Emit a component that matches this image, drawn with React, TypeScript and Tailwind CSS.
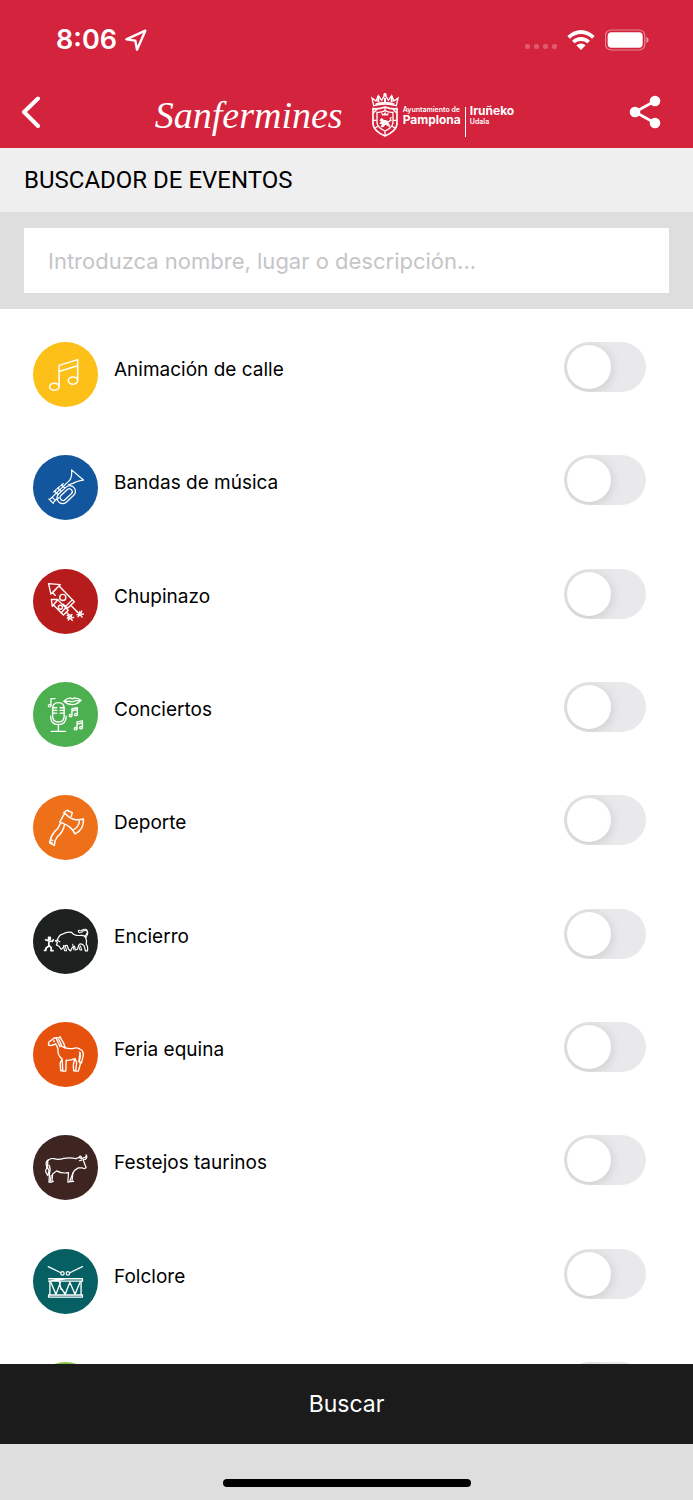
import type { ReactNode } from "react";

type Category = { id: string; label?: string; color: string; icon: ReactNode };

const Spark = ({ x, y }: { x: number; y: number }) => (
  <g transform={`translate(${x} ${y})`}>
    <path d="M-4-3L-9-6M3-4L5-9M5 1L10 0M3 5L6 9M-3 4L-6 8M-5 1L-9 2M0-4L-1-8M-3-2L2-4L4 2L-1 4Z" />
  </g>
);

const Notes = ({ x, y }: { x: number; y: number }) => (
  <g transform={`translate(${x} ${y})`} strokeWidth="4">
    <path d="M-5 10V-9L11-12V7M-5-3L11-6" />
    <ellipse cx="-9" cy="11" rx="4" ry="3.5" />
    <ellipse cx="7" cy="8" rx="4" ry="3.5" />
  </g>
);

const categories: Category[] = [
  {
    id: "animacion",
    label: "Animación de calle",
    color: "bg-[#fcc018]",
    icon: (
      <g strokeWidth="4.4">
        <path d="M77 132V69L132 52V114M77 87L132 70" />
        <ellipse cx="63" cy="132" rx="14" ry="10.5" />
        <ellipse cx="118" cy="114" rx="14" ry="10.5" />
      </g>
    ),
  },
  {
    id: "bandas",
    label: "Bandas de música",
    color: "bg-[#12569d]",
    icon: (
      <g>
        <path d="M114 44L149 74Q128 77 118 84M114 44Q116 66 108 75" />
        <path d="M108 75L52 129M118 84L105 88M47 130L60 143M52 129L57 125L66 134L60 140M66 134L76 126" />
        <g transform="rotate(-43 97 116)">
          <rect x="66" y="101" width="62" height="33" rx="16" />
          <rect x="76" y="109" width="42" height="17" rx="8" />
        </g>
        <path d="M64 107L72 115M74 98L82 106M85 89L93 97M61 109L68 103M71 100L78 94M82 91L89 85" strokeWidth="4" />
      </g>
    ),
  },
  {
    id: "chupinazo",
    label: "Chupinazo",
    color: "bg-[#b71c1c]",
    icon: (
      <g strokeWidth="4">
        <path d="M46 43L81 46L53 74ZM77 50L122 97L103 115L89 104M58 70L66 78M60 68L72 55M115 92L97 110M112 108L132 128" />
        <circle cx="88" cy="84" r="9" />
        <path d="M54 90L74 90L57 110ZM74 92L104 122L90 136L62 108M96 115L83 130M101 130L106 136" />
        <circle cx="81" cy="113" r="6" />
        <Spark x={139} y={133} />
        <Spark x={110} y={143} />
      </g>
    ),
  },
  {
    id: "conciertos",
    label: "Conciertos",
    color: "bg-[#4caf50]",
    icon: (
      <g>
        <path d="M58 79Q58 61 75 61Q92 61 92 79V101Q92 118 75 118Q58 118 58 101Z" strokeWidth="4" />
        <path d="M52 101Q52 126 75 126Q98 126 98 101M75 126V145M54 146H96M59 76H70M59 84H70M59 92H70M80 76H91M80 84H91M80 92H91" strokeWidth="4" />
        <path d="M53 69V49H65M53 55V49" strokeWidth="4" />
        <ellipse cx="49" cy="70" rx="4" ry="3.5" />
        <path d="M91 57Q101 47 110 47L116 50L122 47Q133 48 142 54Q130 67 116 67Q102 67 91 57ZM92 57H109L116 59L123 56L141 54" />
        <Notes x={120} y={88} />
        <Notes x={135} y={127} />
      </g>
    ),
  },
  {
    id: "deporte",
    label: "Deporte",
    color: "bg-[#ee711a]",
    icon: (
      <g strokeWidth="4.4">
        <path d="M94 53Q108 70 126 73Q139 74 149 71Q151 102 124 115Q119 104 111 97Q100 87 79 80ZM94 53L79 80M137 75Q138 93 117 104" />
        <path d="M91 52L100 45L116 52L113 63M81 84Q75 99 63 109Q52 122 49 141L63 149Q63 135 72 123Q89 109 93 88M52 132L58 134M50 139L56 141" />
      </g>
    ),
  },
  {
    id: "encierro",
    label: "Encierro",
    color: "bg-[#1d2120]",
    icon: (
      <g>
        <path d="M72 93Q76 75 88 74Q100 66 114 69Q122 80 140 78Q153 76 156 86Q160 95 157 104Q163 110 161 124H155L151 109Q143 100 137 104L131 119L125 121L123 110L116 114L111 124L105 119L101 108Q93 106 88 115L83 119L77 110L69 106L72 99L66 94L71 92L79 97" />
        <path d="M153 81Q164 68 158 64Q149 61 143 69Q134 72 134 64Q137 61 141 65Q147 58 157 60Q167 67 156 85M90 108L93 123H99L96 111M134 108L139 121L144 121L140 109M117 104L121 121" strokeWidth="3" />
        <path d="M46 84H51V89H46ZM47 94L37 91M47 94L57 96L60 91M47 95V109L38 116V122H34M48 109L54 114L53 123H59" strokeWidth="5" />
      </g>
    ),
  },
  {
    id: "equina",
    label: "Feria equina",
    color: "bg-[#e6510e]",
    icon: (
      <g strokeWidth="4">
        <path d="M46 60L55 53Q62 45 77 47L80 43L83 50Q91 60 95 76Q107 81 123 77Q132 75 138 80Q151 84 148 101L143 121L135 116Q143 103 138 89" />
        <path d="M46 60L46 68L53 70L67 65Q75 75 74 91Q77 103 86 109L88 145H97L98 113Q111 114 124 108L129 120L126 145H134L140 124Q134 111 139 91M86 109L80 122L82 144H88M123 109L119 127L120 144H126" />
        <path d="M76 51Q83 62 84 71L96 77M69 49L73 58L80 73" />
        <circle cx="62" cy="57" r="1" />
      </g>
    ),
  },
  {
    id: "taurinos",
    label: "Festejos taurinos",
    color: "bg-[#3e2522]",
    icon: (
      <g>
        <path d="M42 79Q48 67 62 70Q76 74 91 69Q110 66 127 70Q137 64 143 70L154 66Q158 62 157 59Q162 66 155 72L148 73L157 97Q151 101 145 97L134 97Q122 103 118 112L115 137H120M106 139H103L105 111Q85 115 70 106L58 115L56 137H60M50 139H47L49 112Q53 100 47 89" />
        <path d="M45 73Q35 80 41 95L37 108L44 120L47 105L42 94L44 80M136 66Q141 58 144 68M137 76L144 74M118 112L108 138H115M54 119L50 139H56" />
      </g>
    ),
  },
  {
    id: "folclore",
    label: "Folclore",
    color: "bg-[#065f62]",
    icon: (
      <g>
        <path d="M45 52L82 70M146 52L109 70" />
        <circle cx="87" cy="72" r="5" />
        <circle cx="103" cy="72" r="5" />
        <path d="M46 88H93M98 88H146V95H46ZM46 136H146V142H46ZM50 96V135M142 96V135" strokeWidth="4" />
        <path d="M52 97L68 134L81 98M78 97L83 119M86 119L95 134L109 98L124 134L139 98M96 134L83 116" strokeWidth="4" />
      </g>
    ),
  },
  { id: "otros", color: "bg-[#8bc34a]", icon: null },
];

function StatusBar() {
  return (
    <div className="flex h-20 items-center justify-between pr-11 pl-14 text-white">
      <div className="flex items-center gap-2">
        <span className="text-[27px] leading-8 font-semibold">8:06</span>
        <svg className="size-[22px]" viewBox="0 0 66 66" fill="none" stroke="currentColor" strokeWidth="7" strokeLinejoin="round" aria-hidden="true">
          <path d="M61 5L4 31L31 35L36 62Z" />
        </svg>
      </div>
      <div className="flex items-center">
        <div className="mt-3 mr-2.5 flex gap-1">
          <i className="size-[5px] rounded-xs bg-white/25" />
          <i className="size-[5px] rounded-xs bg-white/25" />
          <i className="size-[5px] rounded-xs bg-white/25" />
          <i className="size-[5px] rounded-xs bg-white/25" />
        </div>
        <svg className="mr-2.5 h-5 w-7" viewBox="0 0 84 60" fill="currentColor" aria-hidden="true">
          <path d="M1 18Q20 0 42 0T83 18L75 26Q60 12 42 12T9 26Z" />
          <path d="M15 32Q27 21 42 21T69 32L61 40Q53 33 42 33T23 40Z" />
          <path d="M28 46Q42 35 56 46L42 60Z" />
        </svg>
        <svg className="h-[22px] w-11" viewBox="0 0 132 66" aria-hidden="true">
          <rect x="1.5" y="3" width="118" height="60" rx="17" fill="none" stroke="white" strokeOpacity=".45" strokeWidth="3.5" />
          <rect x="8" y="10" width="105" height="46" rx="11" fill="white" />
          <path d="M124 24Q131 26 131 33T124 42Z" fill="white" fillOpacity=".5" />
        </svg>
      </div>
    </div>
  );
}

function Crest() {
  return (
    <svg className="h-11 w-7" viewBox="0 0 84 132" fill="none" stroke="white" strokeWidth="4" aria-hidden="true">
      <path d="M8 38L3 15L15 24L22 8L32 22L42 5L52 22L62 8L69 24L81 15L76 38Q42 28 8 38Z" />
      <path d="M14 34Q42 25 70 34M42 0V10M37 5H47M22 9V28M62 9V28M42 14V28" strokeWidth="6" />
      <path d="M6 47Q25 49 42 42Q59 49 78 47V94Q75 115 42 129Q9 115 6 94Z" strokeWidth="5" />
      <path d="M18 58Q32 59 42 53Q52 59 66 58V90Q64 104 42 114Q20 104 18 90Z" />
      <path d="M7 60L18 49M77 60L66 49M7 82H17M67 82H77M12 105L22 99M72 105L62 99M42 42V53M42 115V128" />
      <path d="M32 60L33 67H51L52 60L46 64L42 58L38 64Z" fill="white" strokeWidth="1" />
      <path d="M27 82L32 76L38 82L49 84L53 92L56 101L49 97L43 94L37 101H30L35 93L27 91L32 86ZM51 86L61 83L57 75L62 74" fill="white" strokeWidth="3" />
    </svg>
  );
}

function NavBar() {
  return (
    <nav className="flex h-[68px] items-center justify-between pr-8 pb-1 pl-5 text-white">
      <button type="button" aria-label="Volver">
        <svg className="h-8 w-5" viewBox="0 0 20 32" fill="none" stroke="currentColor" strokeWidth="4" strokeLinecap="round" strokeLinejoin="round">
          <path d="M18 2.5L4 16L18 30" />
        </svg>
      </button>
      <div className="flex items-center gap-7 pt-1.5">
        <span className="font-['Liberation_Serif',serif] text-[38px] leading-10 italic">Sanfermines</span>
        <div className="flex items-center">
          <Crest />
          <div className="ml-1 flex flex-col">
            <span className="text-[7px] leading-[9px] font-semibold">Ayuntamiento de</span>
            <span className="text-[12px] leading-3 font-bold">Pamplona</span>
          </div>
          <div className="ml-1 h-[30px] self-end border-l border-white" />
          <div className="ml-1 flex flex-col">
            <span className="text-[12px] leading-3 font-bold">Iruñeko</span>
            <span className="text-[7px] leading-[9px] font-semibold">Udala</span>
          </div>
        </div>
      </div>
      <button type="button" aria-label="Compartir">
        <svg className="h-[34px] w-8" viewBox="0 0 32 34" fill="currentColor" stroke="currentColor" strokeWidth="2.6">
          <path d="M26 6L6 17L26 28" fill="none" />
          <circle cx="26" cy="6" r="4" />
          <circle cx="6" cy="17" r="4" />
          <circle cx="26" cy="28" r="4" />
        </svg>
      </button>
    </nav>
  );
}

function CategoryRow({ id, label, color, icon }: Category) {
  return (
    <li className="flex items-start">
      <span className={`${color} size-[65px] shrink-0 rounded-full`}>
        <svg className="size-full" viewBox="0 0 192 192" fill="none" stroke="white" strokeWidth="3.6" strokeLinecap="round" strokeLinejoin="round" aria-hidden="true">
          {icon}
        </svg>
      </span>
      <label htmlFor={id} className="ml-4 flex-1 pt-3.5 text-[19px] leading-7">
        {label}
      </label>
      <input
        id={id}
        type="checkbox"
        role="switch"
        aria-label={label ?? "Otros"}
        className="h-[50px] w-[82px] shrink-0 appearance-none overflow-hidden rounded-full bg-[#e9e9eb] p-[3px] before:block before:size-11 before:rounded-full before:bg-white before:shadow-[0_2px_12px_rgba(0,0,0,0.15)] checked:bg-[#34c759] checked:before:ml-8"
      />
    </li>
  );
}

export default function App() {
  return (
    <div className="flex h-screen flex-col bg-white font-['Inter',sans-serif] text-black">
      <header className="shrink-0 bg-[#d4233c]">
        <StatusBar />
        <NavBar />
      </header>
      <h1 className="shrink-0 bg-[#efefef] px-6 py-4 font-['Roboto',sans-serif] text-[24px] leading-8">BUSCADOR DE EVENTOS</h1>
      <div className="shrink-0 bg-[#dedede] px-6 py-4">
        <input
          type="search"
          aria-label="Buscar eventos"
          placeholder="Introduzca nombre, lugar o descripción..."
          className="block h-[65px] w-full bg-white px-6 text-[22px] outline-none placeholder:text-[#c5c5c7]"
        />
      </div>
      <main className="min-h-0 flex-1 overflow-y-auto pt-[33px] pr-[47px] pl-[33px] [scrollbar-width:none]">
        <ul className="flex min-h-[1085px] flex-col justify-between">
          {categories.map((category) => (
            <CategoryRow key={category.id} {...category} />
          ))}
        </ul>
      </main>
      <button type="button" className="h-20 shrink-0 bg-[#1b1b1b] text-[23px] text-white">
        Buscar
      </button>
      <footer className="flex h-14 shrink-0 items-end justify-center bg-[#dedede] pb-[13px]">
        <div className="h-2 w-[248px] rounded-full bg-black" />
      </footer>
    </div>
  );
}
